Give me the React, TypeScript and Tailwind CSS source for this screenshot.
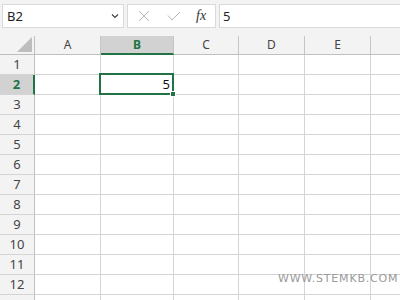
import React from "react";

const cols = [
  { l: "A", w: 66 },
  { l: "B", w: 73 },
  { l: "C", w: 65 },
  { l: "D", w: 66 },
  { l: "E", w: 66 },
  { l: "", w: 40 },
];

const font = { fontFamily: '"Noto Sans", "Open Sans", Arial, sans-serif' };

export default function App() {
  const rows = Array.from({ length: 13 }, (_, i) => i + 1);
  return (
    <div className="relative w-[400px] h-[300px] overflow-hidden bg-[#f3f3f3]" style={font}>
      {/* top bar */}
      <div className="h-[36px] flex items-start pt-[4px] pl-[2px]">
        <div className="w-[122px] h-[24px] bg-white border border-[#d9d9d9] flex items-center justify-between pl-[4px] pr-[4px]">
          <span className="text-[13px] text-[#222] leading-none">B2</span>
          <svg width="8" height="6" viewBox="0 0 8 6">
            <path d="M1 1.5 L4 4.5 L7 1.5" stroke="#444" strokeWidth="1.2" fill="none" />
          </svg>
        </div>
        <div className="ml-[3px] w-[89px] h-[24px] bg-white border border-[#d9d9d9] flex items-center">
          <svg className="ml-[10px]" width="12" height="12" viewBox="0 0 12 12">
            <path d="M1 1 L11 11 M11 1 L1 11" stroke="#b5b5b5" strokeWidth="1" fill="none" />
          </svg>
          <svg className="ml-[17px]" width="14" height="10" viewBox="0 0 14 10">
            <path d="M1 4.5 L5 9 L13 1" stroke="#b5b5b5" strokeWidth="1" fill="none" />
          </svg>
          <span
            className="ml-[15px] text-[14px] italic text-[#333] leading-none"
            style={{ fontFamily: '"Liberation Serif", serif' }}
          >
            fx
          </span>
        </div>
        <div className="ml-[3px] flex-1 h-[24px] bg-white border border-[#d9d9d9] border-r-0 flex items-center pl-[3px]">
          <span className="text-[13px] text-[#222] leading-none">5</span>
        </div>
      </div>

      {/* column header */}
      <div className="flex h-[19px]">
        <div className="w-[35px] shrink-0 border-r border-b border-[#bfbfbf] relative">
          <svg className="absolute right-[2px] bottom-[2px]" width="15" height="15" viewBox="0 0 15 15">
            <path d="M15 0 L15 15 L0 15 Z" fill="#bdbdbd" />
          </svg>
        </div>
        {cols.map((c) => (
          <div
            key={c.l + c.w}
            style={{ width: c.w }}
            className={
              c.l === "B"
                ? "shrink-0 border-r border-[#c6c6c6] border-b-2 border-b-[#217346] bg-[#d2d2d2] flex items-center justify-center text-[12px] font-bold text-[#217346]"
                : "shrink-0 border-r border-b border-[#c6c6c6] border-b-[#bfbfbf] flex items-center justify-center text-[12px] text-[#444]"
            }
          >
            {c.l}
          </div>
        ))}
      </div>

      {/* rows */}
      {rows.map((r) => (
        <div key={r} className="flex h-[20px] bg-white">
          <div
            className={
              r === 2
                ? "w-[35px] shrink-0 bg-[#d2d2d2] border-r-2 border-r-[#217346] border-b border-b-[#d4d4d4] flex items-center justify-center text-[13px] font-bold text-[#217346]"
                : "w-[35px] shrink-0 bg-[#f3f3f3] border-r border-r-[#bfbfbf] border-b border-b-[#d4d4d4] flex items-center justify-center text-[13px] text-[#444]"
            }
          >
            {r <= 12 ? r : ""}
          </div>
          {cols.map((c) => (
            <div
              key={c.l + c.w}
              style={{ width: c.w }}
              className="shrink-0 border-r border-b border-[#d4d4d4] relative"
            >
              {r === 2 && c.l === "B" && (
                <div className="absolute left-[-2px] top-[-2px] right-[-1px] bottom-[-1px] border-2 border-[#217346] flex items-center justify-end pr-[2px] z-10">
                  <span className="text-[13px] text-[#111] leading-none">5</span>
                  <div className="absolute right-[-4px] bottom-[-4px] w-[6px] h-[6px] bg-[#217346] border border-white" />
                </div>
              )}
            </div>
          ))}
        </div>
      ))}

      <div
        className="absolute left-[278px] top-[271px] text-[11px] tracking-[0.8px] text-[#9a9a9a]"
        style={{ fontFamily: '"DejaVu Sans", sans-serif' }}
      >
        WWW.STEMKB.COM
      </div>
    </div>
  );
}
